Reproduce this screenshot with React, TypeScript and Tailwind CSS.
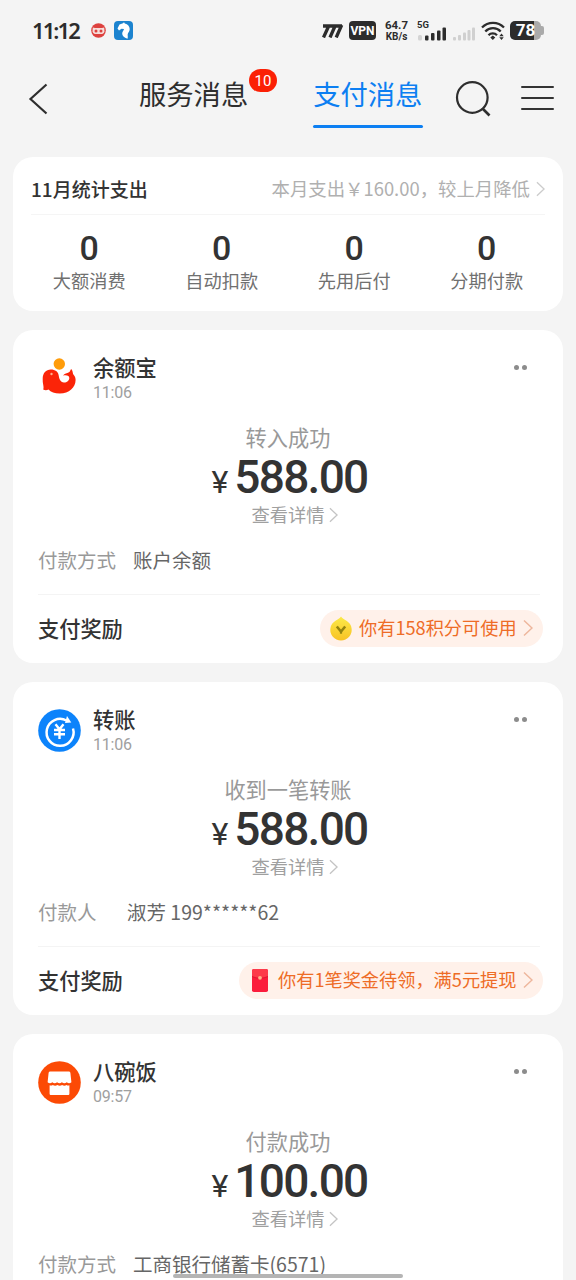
import type { ReactNode } from 'react';

const FONT = "font-['Noto_Sans_CJK_SC','Noto_Sans',sans-serif]";

type Bill = {
  id: string;
  icon: ReactNode;
  title: string;
  time: string;
  status: string;
  amount: string;
  label: string;
  labelWidth: string;
  value: string;
  reward?: { icon: ReactNode; text: string; width: string };
};

const stats = ['大额消费', '自动扣款', '先用后付', '分期付款'];

const bills: Bill[] = [
  {
    id: 'yuebao',
    icon: <FishIcon />,
    title: '余额宝',
    time: '11:06',
    status: '转入成功',
    amount: '588.00',
    label: '付款方式',
    labelWidth: 'w-[95px]',
    value: '账户余额',
    reward: { icon: <PointsIcon />, text: '你有158积分可使用', width: 'w-[223px]' },
  },
  {
    id: 'transfer',
    icon: <TransferIcon />,
    title: '转账',
    time: '11:06',
    status: '收到一笔转账',
    amount: '588.00',
    label: '付款人',
    labelWidth: 'w-[89px]',
    value: '淑芳 199******62',
    reward: { icon: <EnvelopeIcon />, text: '你有1笔奖金待领，满5元提现', width: 'w-[304px]' },
  },
  {
    id: 'shop',
    icon: <ShopIcon />,
    title: '八碗饭',
    time: '09:57',
    status: '付款成功',
    amount: '100.00',
    label: '付款方式',
    labelWidth: 'w-[95px]',
    value: '工商银行储蓄卡(6571)',
  },
];

function Chevron({ className }: { className: string }) {
  return (
    <svg className={className} viewBox="0 0 10 18" fill="none" stroke="currentColor" strokeWidth="1.5">
      <path d="M1 1.5 9 9l-8 7.5" />
    </svg>
  );
}

function FishIcon() {
  return (
    <svg className="size-[43px]" viewBox="0 0 43 43">
      <circle cx="21.3" cy="7" r="5.7" fill="#ff9c0a" />
      <path
        d="M4.700 22C4.700 16 8 12.500 12.800 12.500c4.500 0 7.200 2.300 7.800 5.500.6 3.500 1.600 7.500 5.400 7.500 3 0 5.300-2 5.300-4.500 0-2.200-2-3-6.300-2.500 1.500-2 4-2.200 6-3.200 1-.6 1.400-2.500 2.200-3.300 1.600 1.500 1.400 3.500 1.900 5 .7 1.500 2.500 2.200 2.500 6 0 7.500-6.500 13.500-15.800 13.500-5.300 0-9-1.500-11.300-4-1.500.8-3.500 1-5.300 0 .6-1.500.3-3 0-4.700-.5-1.800-.5-3.800-.5-5.800Z"
        fill="#fb2408"
      />
      <circle cx="13.500" cy="17" r="1.200" fill="#ffb08c" />
    </svg>
  );
}

function TransferIcon() {
  return (
    <svg className="size-[43px]" viewBox="0 0 43 43" fill="none" stroke="#fff">
      <circle cx="21.500" cy="21.500" r="21.300" fill="#0c83fb" stroke="none" />
      <path d="M35 19.500A13.500 13.500 0 1 1 28.500 11.500" strokeWidth="2.500" />
      <path d="m29 7 4.300 6.500-6.300.500Z" fill="#fff" stroke="none" />
      <path d="m17.500 15.300 4 5 4-5M16 21h11M16 25.300h11M21.500 20v10" strokeWidth="2.400" />
    </svg>
  );
}

function ShopIcon() {
  return (
    <svg className="size-[43px]" viewBox="0 0 43 43">
      <circle cx="21.500" cy="21.500" r="21.300" fill="#fc4a05" />
      <path
        d="M12.300 10.500h18.400c1 0 1.500.5 1.700 1.500l1 9.300c-1.600 1.200-3 1.200-4.600 0-1.700 1.200-3.300 1.200-4.900 0-1.600 1.200-3.200 1.200-4.800 0-1.600 1.200-3.200 1.200-4.800 0-1.600 1.200-3.200 1.200-4.700 0l1-9.300c.2-1 .7-1.500 1.700-1.500Z"
        fill="#fff"
      />
      <path
        d="M11.600 24.300c1.300.5 2.300.3 3.200-.3 1.500 1 3.200 1 4.600 0 1.500 1 3.300 1 4.700 0 1.500 1 3 1 4.500 0 .8.600 1.700.6 2.800.3v8.200c0 1-.5 1.500-1.500 1.500H13.100c-1 0-1.500-.5-1.500-1.500Z"
        fill="#fff"
      />
    </svg>
  );
}

function PointsIcon() {
  return (
    <svg className="h-[25px] w-[22px]" viewBox="0 0 22 25">
      <defs>
        <linearGradient id="points" x1="0" y1="0" x2="0" y2="1">
          <stop offset="0" stopColor="#fbea4a" />
          <stop offset="1" stopColor="#f8c224" />
        </linearGradient>
      </defs>
      <path d="M11 .5c1.200 1.700 3.200 2.800 5.500 4.200A10.700 10.700 0 1 1 5.500 4.700C7.800 3.300 9.800 2.200 11 .5Z" fill="url(#points)" />
      <path d="m6.800 10.500 4.200 5 4.200-5" fill="none" stroke="#94840f" strokeWidth="2.600" />
      <path d="M11 14.500v3.200" stroke="#94840f" strokeWidth="2.200" />
    </svg>
  );
}

function EnvelopeIcon() {
  return (
    <svg className="h-[23px] w-[16px]" viewBox="0 0 16 23">
      <rect width="16" height="23" rx="1.800" fill="#fb1c3c" />
      <path d="M0 7.500Q8 11 16 7.500V1.800Q16 0 14.200 0H1.800Q0 0 0 1.800Z" fill="#fd3a4a" />
      <path d="M0 7.500Q8 11 16 7.500" fill="none" stroke="#d9102c" strokeWidth=".8" />
      <circle cx="8" cy="8.800" r="1.900" fill="#ffb48a" />
    </svg>
  );
}

function StatusBar() {
  return (
    <div className="flex h-[61px] shrink-0 items-center px-[32px] text-[#2c2c2c]">
      <span className="w-[59px] font-['Noto_Sans',sans-serif] text-[22px] font-semibold tracking-[-1.900px]">11:12</span>
      <svg className="size-[15px]" viewBox="0 0 15 15">
        <circle cx="7.500" cy="7.500" r="7.300" fill="#dd413e" />
        <path d="M1.800 4.500 4 5h7l2.200-.5.300 4c-.5 2-2 2.500-3.500 2.500H5c-1.500 0-3-.5-3.500-2.500Z" fill="#f6dcd8" />
        <circle cx="5" cy="7.900" r="1.500" fill="#dd413e" />
        <circle cx="10" cy="7.900" r="1.500" fill="#dd413e" />
      </svg>
      <svg className="ml-[8px] size-[19px]" viewBox="0 0 19 19">
        <rect width="19" height="19" rx="4" fill="#1c83cf" />
        <path
          d="M3.500 7.500 5.500 3.500 9 2.200l1-1 .8 1.200c3 .6 4.900 2.800 4.900 5.600 0 2.800-1.700 3.500-2 5.200-.2 1.300.5 2.500-.2 4.500-3.500-1-5.500-3-5.300-5.500.2-1.800 1.600-2.500 1.800-4.200L7.500 7.800 5 9.500Z"
          fill="#fff"
        />
      </svg>

      <div className="ml-auto flex items-center">
        <svg className="h-[14px] w-[23px]" viewBox="0 0 23 14" fill="none" stroke="#2c2c2c" strokeWidth="3.300">
          <path d="M2 2h19M8.200 1 2.500 13.500M14.500 1 9 13.500M20.700 1l-5.500 12.500" />
        </svg>
        <span className="ml-[5px] flex h-[19px] w-[27px] items-center justify-center rounded-[4px] bg-[#2c2c2c] font-['Roboto',sans-serif] text-[12px] font-bold text-white">
          VPN
        </span>
        <span className="ml-[8px] flex w-[25px] flex-col items-center font-['Roboto',sans-serif] font-bold">
          <span className="text-[11.500px] leading-[12px]">64.7</span>
          <span className="text-[10px] leading-[11px]">KB/s</span>
        </span>
        <svg className="ml-[8px] h-[22px] w-[30px]" viewBox="0 0 30 22" fill="#2c2c2c">
          <text x="0" y="8" fontSize="9.500" fontWeight="700" fontFamily="Roboto, sans-serif">5G</text>
          <rect x="1" y="15" width="4" height="5.500" rx="1.500" fill="#d4d4d4" />
          <rect x="8" y="15.500" width="3.500" height="5" rx="1" />
          <rect x="14" y="13" width="3.500" height="7.500" rx="1" />
          <rect x="20" y="10.500" width="3.500" height="10" rx="1" />
          <rect x="25.500" y="7.500" width="3.500" height="13" rx="1" />
        </svg>
        <svg className="ml-[6px] h-[22px] w-[23px]" viewBox="0 0 23 22" fill="#d0d0d0">
          <rect x="0" y="17" width="3" height="3.500" rx="1" />
          <rect x="5" y="15" width="3" height="5.500" rx="1" />
          <rect x="10" y="12.500" width="3" height="8" rx="1" />
          <rect x="14.500" y="10" width="3" height="10.500" rx="1" />
          <rect x="19" y="7.500" width="3" height="13" rx="1" />
        </svg>
        <svg className="ml-[5px] h-[20px] w-[24px]" viewBox="0 0 24 20" fill="none" stroke="#2c2c2c" strokeWidth="2.300">
          <path d="M1 6.500a15.500 15.500 0 0 1 22 0M4.300 10.500a10.500 10.500 0 0 1 15.400 0M7.500 14.200a6 6 0 0 1 8.500 0" />
          <path d="m11.800 14.500 2.500 2-2.500 2.500-2.500-2.500Z M20.500 12.500l2.200 2.700h-4.400ZM20.500 19l2.200-2.700h-4.400Z" fill="#2c2c2c" stroke="none" />
        </svg>
        <span className="ml-[5px] flex h-[19px] w-[31px] items-center justify-center rounded-[5px] bg-linear-to-r from-[#2c2c2c] from-78% to-[#aaa] to-78% font-['Roboto',sans-serif] text-[17px] font-bold text-white">
          78
        </span>
        <span className="h-[9px] w-[3px] rounded-r-[2px] bg-[#aaa]" />
      </div>
    </div>
  );
}

function NavBar() {
  return (
    <div className="flex h-[96px] shrink-0 items-start pl-[28px] text-[#2e2e2e]">
      <svg className="mt-[22px] h-[32px] w-[20px]" viewBox="0 0 20 32" fill="none" stroke="currentColor" strokeWidth="2.200">
        <path d="M18.500 1.500 2.500 16l16 14.500" />
      </svg>
      <div className="relative ml-[91px] text-[27.300px] leading-[36px]">
        <div className="mt-[14px] whitespace-nowrap">服务消息</div>
        <span className="absolute top-[8px] left-[110px] flex h-[23px] w-[28px] items-center justify-center rounded-full bg-[#fb2005] font-['Roboto',sans-serif] text-[15px] text-white">
          10
        </span>
      </div>
      <div className="ml-[65px] w-[110px] text-[27.300px] leading-[36px] text-[#0c7ff2]">
        <div className="mt-[14px] whitespace-nowrap">支付消息</div>
        <div className="mt-[14px] h-[3px] rounded-full bg-[#0c7ff2]" />
      </div>
      <svg className="mt-[19px] ml-[32px] size-[37px]" viewBox="0 0 37 37" fill="none" stroke="currentColor" strokeWidth="2.200">
        <circle cx="17.300" cy="17.500" r="15.300" />
        <path d="m27.500 28.500 7 7" strokeWidth="2.600" />
      </svg>
      <div className="mt-[25px] ml-[29px] flex w-[33px] flex-col gap-[9px]">
        <div className="h-[2px] rounded-full bg-[#333]" />
        <div className="h-[2px] rounded-full bg-[#333]" />
        <div className="h-[2px] rounded-full bg-[#333]" />
      </div>
    </div>
  );
}

function StatsCard() {
  return (
    <section className="h-[154px] shrink-0 rounded-[20px] bg-white px-[18px]">
      <div className="flex h-[58px] items-center justify-between border-b border-[#f5f5f5] pt-[7px]">
        <h2 className="text-[19px] font-medium whitespace-nowrap text-[#333]">11月统计支出</h2>
        <div className="flex items-center whitespace-nowrap text-[#b0b0b0]">
          <span className="text-[18.400px]">本月支出￥160.00，较上月降低</span>
          <Chevron className="ml-[6px] h-[16px] w-[9px] text-[#ccc]" />
        </div>
      </div>
      <div className="-mx-[8px] grid grid-cols-4 pt-[15px] text-center">
        {stats.map((name) => (
          <div key={name}>
            <div className="font-['Roboto',sans-serif] text-[34px] leading-[37px] font-medium text-[#333]">0</div>
            <div className="text-[18.200px] leading-[27px] text-[#707070]">{name}</div>
          </div>
        ))}
      </div>
    </section>
  );
}

function BillCard({ bill }: { bill: Bill }) {
  return (
    <section className="h-[333px] shrink-0 rounded-[20px] bg-white px-[25px]">
      <header className="flex h-[93px] items-start pt-[24px]">
        <div className="mt-[3px]">{bill.icon}</div>
        <div className="ml-[12px]">
          <h3 className="text-[21.300px] leading-[26px] font-medium text-[#333]">{bill.title}</h3>
          <div className="font-['Roboto',sans-serif] text-[16px] leading-[25px] tracking-[-0.200px] text-[#a0a0a0]">{bill.time}</div>
        </div>
        <div className="mt-[11px] mr-[11px] ml-auto flex gap-[3px]">
          <span className="size-[5px] rounded-full bg-[#8c8c8c]" />
          <span className="size-[5px] rounded-full bg-[#8c8c8c]" />
        </div>
      </header>
      <div className="flex flex-col items-center">
        <div className="text-[21.200px] leading-[28px] text-[#999]">{bill.status}</div>
        <div className="flex h-[51px] items-baseline pt-[2px] pl-[3px] font-['Roboto',sans-serif] text-[#333]">
          <span className="mr-[6px] text-[32px] leading-[49px]">¥</span>
          <span className="text-[46px] leading-[49px] font-medium tracking-[-1.700px]">{bill.amount}</span>
        </div>
        <div className="flex h-[26px] items-center pl-[13px] text-[18.300px] text-[#a0a0a0]">
          <span>查看详情</span>
          <Chevron className="ml-[4px] h-[16px] w-[9px] text-[#c4c4c4]" />
        </div>
      </div>
      <div className="mt-[18px] flex text-[19.500px] leading-[28px] whitespace-nowrap">
        <span className={`${bill.labelWidth} text-[#999]`}>{bill.label}</span>
        <span className="text-[#666]">{bill.value}</span>
      </div>
      {bill.reward && (
        <div className="mt-[20px] -mr-[5px] flex h-[68px] items-center justify-between bg-[linear-gradient(#f4f4f4,#f4f4f4)] bg-size-[502px_1px] bg-no-repeat">
          <span className="text-[21.200px] font-medium text-[#333]">支付奖励</span>
          <div className={`${bill.reward.width} flex h-[37px] items-center rounded-full bg-[#fff1ea] pl-[10px] text-[#ee6c26]`}>
            <div className="flex w-[29px] justify-center pr-[7px]">{bill.reward.icon}</div>
            <span className="text-[18.200px] whitespace-nowrap">{bill.reward.text}</span>
            <Chevron className="mr-[10px] ml-auto h-[18px] w-[10px] text-[#eeb69c]" />
          </div>
        </div>
      )}
    </section>
  );
}

export default function App() {
  return (
    <div className={`${FONT} relative flex h-[1280px] w-[576px] flex-col overflow-hidden bg-[#f4f4f4]`}>
      <StatusBar />
      <NavBar />
      <main className="flex flex-col gap-[19px] px-[13px]">
        <StatsCard />
        {bills.map((bill) => (
          <BillCard key={bill.id} bill={bill} />
        ))}
      </main>
      {/* home gesture indicator */}
      <div className="absolute top-[1274px] left-[173px] h-[4px] w-[230px] rounded-full bg-[#b4b4b4]" />
    </div>
  );
}
